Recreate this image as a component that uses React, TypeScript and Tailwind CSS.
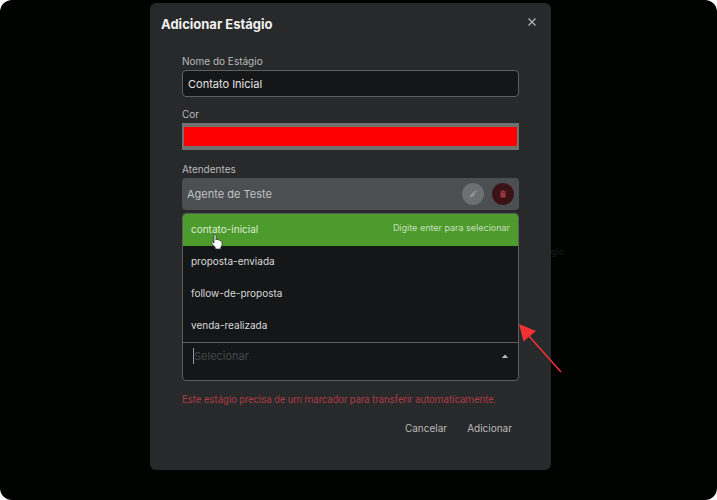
import React, { useState } from 'react';

const stages = ['contato-inicial', 'proposta-enviada', 'follow-de-proposta', 'venda-realizada'];

function PencilIcon() {
  return (
    <svg viewBox="0 0 10 10" className="size-2.5" fill="#94989a">
      <path d="M1.8 8.4 L2.4 6 L5.8 2.8 L7.4 4.4 L4.2 7.8 Z" />
      <path d="M6.4 2.2 L7 1.7 Q7.5 1.4 8.1 1.9 Q8.7 2.5 8.4 3.1 L7.9 3.8 Z" />
    </svg>
  );
}

function TrashIcon() {
  return (
    <svg viewBox="0 0 10 10" className="size-2.5" fill="none" stroke="#b03f4a">
      <path d="M2 3 H8 M4 2 H6" />
      <path d="M2.9 4.3 V8 H7.1 V4.3 Z M4.3 4.3 V8 M5.8 4.3 V8 M2.9 6 H7.1" strokeWidth="0.9" />
    </svg>
  );
}

function PointerHand() {
  return (
    <svg viewBox="0 0 12 16" className="pointer-events-none absolute top-[21px] left-[29px] h-4 w-3" fill="#fff" stroke="#222" strokeWidth="0.7">
      <path d="M3 1.6 Q3 0.5 4 0.5 Q5 0.5 5 1.6 V6 L5.3 5.2 Q6.6 4.6 7 6 Q8.4 5.2 8.9 6.7 Q10.6 6.2 11 8 V10.6 Q10.8 12.3 9.8 13.2 V15 H4.2 V13.5 L0.8 9.6 Q0.2 8.4 1.2 8.1 Q2.1 8 3 9.2 Z" />
    </svg>
  );
}

function Arrow() {
  return (
    <svg viewBox="0 0 44 50" className="pointer-events-none absolute top-[111px] left-full h-[50px] w-11">
      <path d="M9 11 L42 48" stroke="#f03235" strokeWidth="1.6" />
      <path d="M0 0 L17 7 L4.5 17.5 Z" fill="#f03235" />
    </svg>
  );
}

export default function App() {
  const [name, setName] = useState('Contato Inicial');
  const [color, setColor] = useState('#ff0000');
  const [active, setActive] = useState(0);

  return (
    <div className="bg-white font-['Inter',sans-serif]">
      <main className="min-h-screen rounded-xl bg-[#010301] pt-[3px] pr-4">
        <section
          role="dialog"
          aria-labelledby="dialog-title"
          className="relative mx-auto w-full max-w-[401px] rounded-md bg-[#28292b] pb-[34px]"
        >
          <span className="absolute top-[241px] left-full text-[9px] leading-4 text-[#1c1d1f]">gio</span>

          <header className="flex items-start justify-between pt-[11px] pr-[11px] pl-[11px]">
            <h1 id="dialog-title" className="text-[13px] leading-5 font-bold text-[#f1f1f1]">Adicionar Estágio</h1>
            <button type="button" aria-label="Fechar" className="flex size-4 items-center justify-center">
              <svg viewBox="0 0 8 8" className="size-2" stroke="#b9babb" strokeWidth="1.1">
                <path d="M0.5 0.5 L7.5 7.5 M7.5 0.5 L0.5 7.5" />
              </svg>
            </button>
          </header>

          <form className="px-8 pt-[19px]" onSubmit={(e) => e.preventDefault()}>
            <label htmlFor="name" className="block h-[17px] text-[10px] leading-4 text-[#b9babb]">Nome do Estágio</label>
            <input
              id="name"
              value={name}
              onChange={(e) => setName(e.target.value)}
              className="block h-[27px] w-full rounded border border-[#5c5e60] bg-[#151618] px-[5px] text-[11px] text-[#e4e4e5] outline-none"
            />

            <label htmlFor="color" className="mt-[9px] block h-[17px] text-[10px] leading-4 text-[#b9babb]">Cor</label>
            <input
              id="color"
              type="color"
              value={color}
              onChange={(e) => setColor(e.target.value)}
              className="block h-[27px] w-full border border-[#6e7071] bg-[#717171] px-px py-[3px] [&::-webkit-color-swatch]:border-0 [&::-webkit-color-swatch-wrapper]:p-0"
            />

            <h2 className="mt-[11px] h-[17px] text-[10px] leading-4 text-[#b9babb]">Atendentes</h2>
            <div className="flex h-8 items-center gap-2 rounded-sm bg-[#4b4f52] pr-[5px] pl-[5px]">
              <span className="flex-1 text-[11px] text-[#c0c2c3]">Agente de Teste</span>
              <button type="button" aria-label="Editar" className="flex size-[22px] items-center justify-center rounded-full bg-[#6c7072]">
                <PencilIcon />
              </button>
              <button type="button" aria-label="Remover" className="flex size-[22px] items-center justify-center rounded-full bg-[#3b1317]">
                <TrashIcon />
              </button>
            </div>

            <div className="relative mt-[3px]">
              <div className="overflow-hidden rounded border border-[#5c5e60] bg-[#151618]">
                <ul id="stages" role="listbox" aria-label="Marcadores" className="border-b border-[#5c5e60]">
                  {stages.map((stage, idx) => (
                    <li
                      key={stage}
                      role="option"
                      aria-selected={idx === active}
                      onMouseEnter={() => setActive(idx)}
                      className={`flex h-8 items-center justify-between px-2 pb-0.5 text-[10px] leading-4 ${idx === active ? 'bg-[#4c9b2c] text-[#dcebd5]' : 'text-[#d8d9da]'}`}
                    >
                      <span>{stage}</span>
                      {idx === active && <span className="pb-0.5 text-[9px] text-[#c9dfbf]">Digite enter para selecionar</span>}
                    </li>
                  ))}
                </ul>
                <div className="flex h-[37px] items-start pt-[5px] pr-[9px] pl-[10px]">
                  <span className="h-4 w-px bg-[#98999b]" />
                  <input
                    role="combobox"
                    aria-label="Marcador"
                    aria-expanded="true"
                    aria-controls="stages"
                    placeholder="Selecionar"
                    className="h-4 min-w-0 flex-1 bg-transparent text-[11px] text-[#d8d9da] outline-none placeholder:text-[#44484b]"
                  />
                  <svg viewBox="0 0 8 16" className="h-4 w-2" fill="#b9babb">
                    <path d="M0.8 10 L4 6.5 L7.2 10 Z" />
                  </svg>
                </div>
              </div>
              <PointerHand />
              <Arrow />
            </div>

            <p className="mt-[11px] font-['Roboto',sans-serif] text-[10px] leading-4 whitespace-nowrap text-[#a93b44]">
              Este estágio precisa de um marcador para transferir automaticamente.
            </p>

            <div className="mt-3 flex justify-end gap-5 pr-[7px] text-[10px] leading-4 text-[#b9babb]">
              <button type="button">Cancelar</button>
              <button type="submit">Adicionar</button>
            </div>
          </form>
        </section>
      </main>
    </div>
  );
}
